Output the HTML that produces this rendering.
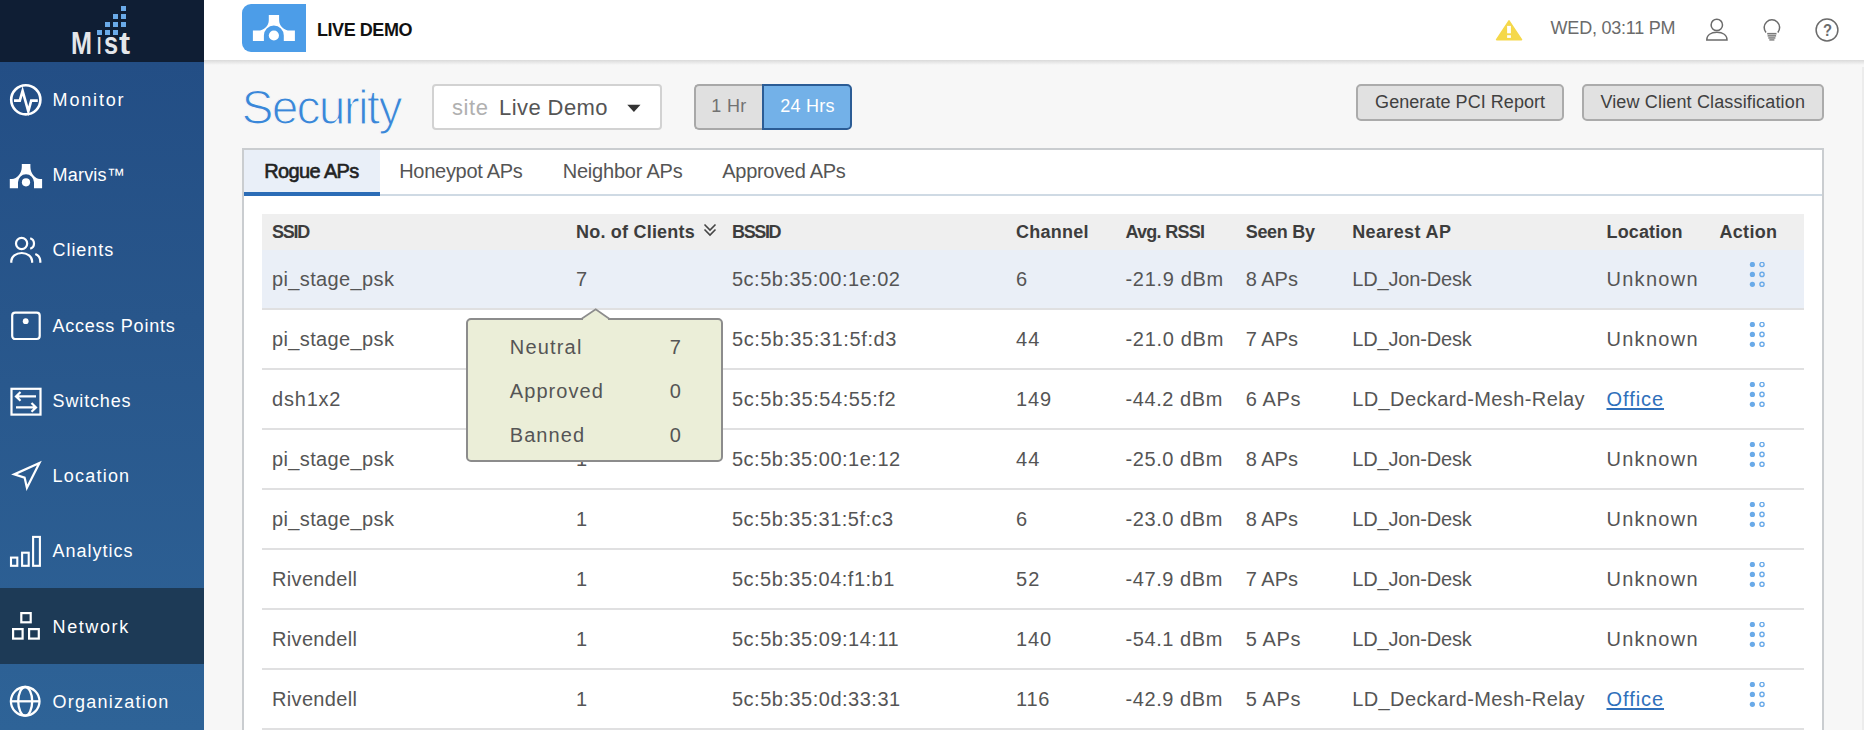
<!DOCTYPE html>
<html><head><meta charset="utf-8"><title>Security</title>
<style>
html,body{margin:0;padding:0;}
body{width:1864px;height:730px;overflow:hidden;position:relative;background:#f7f7f7;font-family:"Liberation Sans",sans-serif;}
.t{position:absolute;line-height:0;white-space:nowrap;}
#side{position:absolute;left:0;top:0;width:204px;height:730px;background:linear-gradient(180deg,#224d84 0px,#234e85 62px,#28568b 320px,#2e6397 730px);}
#logo{position:absolute;left:0;top:0;width:204px;height:62px;background:#0f1e34;}
#sel{position:absolute;left:0;top:588px;width:204px;height:75.5px;background:#1d3a56;}
.sq{position:absolute;width:5px;height:5px;background:#6aaae8;}
#hdr{position:absolute;left:204px;top:0;width:1660px;height:60px;background:#fff;}
#hshadow{position:absolute;left:204px;top:60px;width:1660px;height:5px;background:linear-gradient(180deg,#dadada,#f7f7f7);}
#lbox{position:absolute;left:242px;top:4px;width:64px;height:48px;background:#4c9de8;border-radius:9px 0 0 9px;}
#site{position:absolute;left:432px;top:84.3px;width:225.5px;height:41.4px;background:#fff;border:2px solid #d2d2d2;border-radius:4px;}
#b1h{position:absolute;left:694px;top:84.3px;width:66px;height:41.4px;background:#e0e0e0;border:2px solid #a8a8a8;border-right:none;border-radius:5px 0 0 5px;}
#b24{position:absolute;left:762px;top:84.3px;width:86px;height:41.4px;background:#73b1e8;border:2px solid #2b5c95;border-radius:0 5px 5px 0;}
.btn{position:absolute;box-sizing:border-box;background:#e1e1e1;border:2px solid #ababab;border-radius:5px;}
#panel{position:absolute;left:242px;top:148px;width:1578px;height:600px;background:#fff;border:2px solid #cacdd0;}
#tabact{position:absolute;left:244px;top:150px;width:136px;height:42px;background:#e9eff8;}
#tabline{position:absolute;left:244px;top:194px;width:1578px;height:2px;background:#cfdae4;}
#tabul{position:absolute;left:244px;top:192px;width:136px;height:4px;background:#2b6cb6;}
#thead{position:absolute;left:262px;top:214px;width:1542px;height:36px;background:#efefef;}
#row0{position:absolute;left:262px;top:250px;width:1542px;height:58px;background:#eaeff7;}
.rl{position:absolute;left:262px;width:1542px;height:2px;background:#e0e0e1;}
.dots{position:absolute;}
#tip{position:absolute;left:466px;top:318px;width:253px;height:140px;background:#ebeed8;border:2px solid #8c8c8c;border-radius:5px;}

svg.ic{position:absolute;overflow:visible;}
#vline{position:absolute;left:1862px;top:67px;width:2px;height:663px;background:#ececec;}
</style></head>
<body>
<div id="side"></div><div id="logo"></div><div id="sel"></div>
<div class="sq" style="left:120.7px;top:5.9px"></div>
<div class="sq" style="left:112.7px;top:14.0px"></div>
<div class="sq" style="left:120.7px;top:14.0px"></div>
<div class="sq" style="left:104.8px;top:21.9px"></div>
<div class="sq" style="left:112.7px;top:21.9px"></div>
<div class="sq" style="left:120.7px;top:21.9px"></div>
<div class="sq" style="left:96.9px;top:29.9px"></div>
<div class="sq" style="left:104.8px;top:29.9px"></div>
<div class="sq" style="left:112.7px;top:29.9px"></div>
<div class="t" style="left:71.00px;top:43.43px;font-size:30.5px;color:#e4e6ea;transform:scaleX(0.827);transform-origin:0 0;font-weight:bold;">M</div>
<div class="t" style="left:96.50px;top:43.43px;font-size:30.5px;color:#e4e6ea;transform:scaleX(0.509);transform-origin:0 0;font-weight:bold;">ı</div>
<div class="t" style="left:103.70px;top:43.43px;font-size:30.5px;color:#e4e6ea;transform:scaleX(0.832);transform-origin:0 0;font-weight:bold;">s</div>
<div class="t" style="left:119.40px;top:43.43px;font-size:30.5px;color:#e4e6ea;transform:scaleX(1.094);transform-origin:0 0;font-weight:bold;">t</div>
<div class="t" style="left:52.60px;top:99.76px;font-size:18px;color:#ffffff;letter-spacing:1.83px;">Monitor</div>
<div class="t" style="left:52.60px;top:175.01px;font-size:18px;color:#ffffff;letter-spacing:0.18px;">Marvis™</div>
<div class="t" style="left:52.60px;top:250.26px;font-size:18px;color:#ffffff;letter-spacing:0.92px;">Clients</div>
<div class="t" style="left:52.60px;top:325.51px;font-size:18px;color:#ffffff;letter-spacing:0.75px;">Access Points</div>
<div class="t" style="left:52.60px;top:400.76px;font-size:18px;color:#ffffff;letter-spacing:0.85px;">Switches</div>
<div class="t" style="left:52.60px;top:476.01px;font-size:18px;color:#ffffff;letter-spacing:1.21px;">Location</div>
<div class="t" style="left:52.60px;top:551.26px;font-size:18px;color:#ffffff;letter-spacing:0.98px;">Analytics</div>
<div class="t" style="left:52.60px;top:626.51px;font-size:18px;color:#ffffff;letter-spacing:1.59px;">Network</div>
<div class="t" style="left:52.60px;top:701.76px;font-size:18px;color:#ffffff;letter-spacing:1.24px;">Organization</div>
<div id="hdr"></div><div id="hshadow"></div>
<div id="lbox"></div>
<div class="t" style="left:317.00px;top:29.76px;font-size:18px;color:#111111;font-weight:bold;letter-spacing:-0.44px;">LIVE DEMO</div>
<div class="t" style="left:1823.00px;top:30.56px;font-size:16px;color:#6b6b6b;transform:scaleX(0.923);transform-origin:0 0;font-weight:bold;">?</div>
<div class="t" style="left:1550.60px;top:27.96px;font-size:18px;color:#6b6b6b;letter-spacing:-0.23px;">WED, 03:11 PM</div>
<div class="t" style="left:241.40px;top:108.17px;font-size:48px;color:#3a87d9;letter-spacing:-1.77px;-webkit-text-stroke:1.2px #f7f7f7;">Security</div>
<div id="site"></div>
<div class="t" style="left:452.00px;top:108.08px;font-size:22px;color:#b0b0b0;letter-spacing:0.58px;">site</div>
<div class="t" style="left:499.00px;top:108.08px;font-size:22px;color:#555555;letter-spacing:0.43px;">Live Demo</div>
<div id="b1h"></div><div id="b24"></div>
<div class="t" style="left:711.20px;top:105.76px;font-size:18px;color:#727272;letter-spacing:0.37px;">1 Hr</div>
<div class="t" style="left:780.30px;top:105.76px;font-size:18px;color:#ffffff;letter-spacing:0.26px;">24 Hrs</div>
<div class="btn" style="left:1356px;top:84px;width:208px;height:37.4px"></div>
<div class="btn" style="left:1582px;top:84px;width:241.5px;height:37.4px"></div>
<div class="t" style="left:1375.10px;top:101.96px;font-size:18px;color:#404040;letter-spacing:0.05px;">Generate PCI Report</div>
<div class="t" style="left:1600.40px;top:101.76px;font-size:18px;color:#404040;letter-spacing:0.15px;">View Client Classification</div>
<div id="panel"></div><div id="tabact"></div><div id="tabline"></div><div id="tabul"></div>
<div class="t" style="left:264.30px;top:171.27px;font-size:20px;color:#222222;letter-spacing:-0.63px;-webkit-text-stroke:0.6px #222;">Rogue APs</div>
<div class="t" style="left:399.20px;top:171.27px;font-size:20px;color:#555555;letter-spacing:-0.28px;">Honeypot APs</div>
<div class="t" style="left:562.70px;top:171.27px;font-size:20px;color:#555555;letter-spacing:-0.21px;">Neighbor APs</div>
<div class="t" style="left:722.30px;top:171.27px;font-size:20px;color:#555555;letter-spacing:-0.30px;">Approved APs</div>
<div id="thead"></div><div id="row0"></div>
<div class="rl" style="top:308px"></div>
<div class="rl" style="top:368px"></div>
<div class="rl" style="top:428px"></div>
<div class="rl" style="top:488px"></div>
<div class="rl" style="top:548px"></div>
<div class="rl" style="top:608px"></div>
<div class="rl" style="top:668px"></div>
<div class="rl" style="top:728px"></div>
<div class="t" style="left:272.00px;top:231.76px;font-size:18px;color:#3d3d3d;font-weight:bold;letter-spacing:-1.27px;">SSID</div>
<div class="t" style="left:576.00px;top:231.76px;font-size:18px;color:#3d3d3d;font-weight:bold;letter-spacing:0.21px;">No. of Clients</div>
<div class="t" style="left:732.00px;top:231.76px;font-size:18px;color:#3d3d3d;font-weight:bold;letter-spacing:-1.35px;">BSSID</div>
<div class="t" style="left:1016.00px;top:231.76px;font-size:18px;color:#3d3d3d;font-weight:bold;letter-spacing:0.25px;">Channel</div>
<div class="t" style="left:1125.50px;top:231.76px;font-size:18px;color:#3d3d3d;font-weight:bold;letter-spacing:-0.74px;">Avg. RSSI</div>
<div class="t" style="left:1245.70px;top:231.76px;font-size:18px;color:#3d3d3d;font-weight:bold;letter-spacing:-0.29px;">Seen By</div>
<div class="t" style="left:1352.20px;top:231.76px;font-size:18px;color:#3d3d3d;font-weight:bold;letter-spacing:0.38px;">Nearest AP</div>
<div class="t" style="left:1606.50px;top:231.76px;font-size:18px;color:#3d3d3d;font-weight:bold;letter-spacing:0.13px;">Location</div>
<div class="t" style="left:1719.50px;top:231.76px;font-size:18px;color:#3d3d3d;font-weight:bold;letter-spacing:0.30px;">Action</div>
<div class="t" style="left:272.00px;top:278.77px;font-size:20px;color:#555555;letter-spacing:0.37px;">pi_stage_psk</div>
<div class="t" style="left:576.00px;top:278.77px;font-size:20px;color:#555555;">7</div>
<div class="t" style="left:732.00px;top:278.77px;font-size:20px;color:#555555;letter-spacing:0.49px;">5c:5b:35:00:1e:02</div>
<div class="t" style="left:1016.00px;top:278.77px;font-size:20px;color:#555555;">6</div>
<div class="t" style="left:1125.50px;top:278.77px;font-size:20px;color:#555555;letter-spacing:0.68px;">-21.9 dBm</div>
<div class="t" style="left:1245.70px;top:278.77px;font-size:20px;color:#555555;letter-spacing:-0.01px;">8 APs</div>
<div class="t" style="left:1352.20px;top:278.77px;font-size:20px;color:#555555;letter-spacing:-0.16px;">LD_Jon-Desk</div>
<div class="t" style="left:1606.50px;top:278.77px;font-size:20px;color:#555555;letter-spacing:1.27px;">Unknown</div>
<svg class="dots" style="left:1746px;top:262.3px" width="24" height="30" viewBox="0 0 24 30"><g fill="#6aaae8"><circle cx="6.4" cy="2.5" r="2.6"/><circle cx="6.4" cy="12.4" r="2.6"/><circle cx="6.4" cy="22.3" r="2.6"/></g><g fill="none" stroke="#6aaae8" stroke-width="1.4"><circle cx="16" cy="2.5" r="2.1"/><circle cx="16" cy="12.4" r="2.1"/><circle cx="16" cy="22.3" r="2.1"/></g></svg>
<div class="t" style="left:272.00px;top:338.77px;font-size:20px;color:#555555;letter-spacing:0.37px;">pi_stage_psk</div>
<div class="t" style="left:732.00px;top:338.77px;font-size:20px;color:#555555;letter-spacing:0.62px;">5c:5b:35:31:5f:d3</div>
<div class="t" style="left:1016.00px;top:338.77px;font-size:20px;color:#555555;letter-spacing:1.11px;">44</div>
<div class="t" style="left:1125.50px;top:338.77px;font-size:20px;color:#555555;letter-spacing:0.69px;">-21.0 dBm</div>
<div class="t" style="left:1245.70px;top:338.77px;font-size:20px;color:#555555;letter-spacing:0.04px;">7 APs</div>
<div class="t" style="left:1352.20px;top:338.77px;font-size:20px;color:#555555;letter-spacing:-0.16px;">LD_Jon-Desk</div>
<div class="t" style="left:1606.50px;top:338.77px;font-size:20px;color:#555555;letter-spacing:1.27px;">Unknown</div>
<svg class="dots" style="left:1746px;top:322.3px" width="24" height="30" viewBox="0 0 24 30"><g fill="#6aaae8"><circle cx="6.4" cy="2.5" r="2.6"/><circle cx="6.4" cy="12.4" r="2.6"/><circle cx="6.4" cy="22.3" r="2.6"/></g><g fill="none" stroke="#6aaae8" stroke-width="1.4"><circle cx="16" cy="2.5" r="2.1"/><circle cx="16" cy="12.4" r="2.1"/><circle cx="16" cy="22.3" r="2.1"/></g></svg>
<div class="t" style="left:272.00px;top:398.77px;font-size:20px;color:#555555;letter-spacing:0.80px;">dsh1x2</div>
<div class="t" style="left:732.00px;top:398.77px;font-size:20px;color:#555555;letter-spacing:0.56px;">5c:5b:35:54:55:f2</div>
<div class="t" style="left:1016.00px;top:398.77px;font-size:20px;color:#555555;letter-spacing:0.83px;">149</div>
<div class="t" style="left:1125.50px;top:398.77px;font-size:20px;color:#555555;letter-spacing:0.58px;">-44.2 dBm</div>
<div class="t" style="left:1245.70px;top:398.77px;font-size:20px;color:#555555;letter-spacing:0.65px;">6 APs</div>
<div class="t" style="left:1352.20px;top:398.77px;font-size:20px;color:#555555;letter-spacing:0.39px;">LD_Deckard-Mesh-Relay</div>
<div class="t" style="left:1606.50px;top:398.77px;font-size:20px;color:#2f70bb;letter-spacing:0.94px;text-decoration:underline;text-decoration-thickness:2px;text-underline-offset:2px;">Office</div>
<svg class="dots" style="left:1746px;top:382.3px" width="24" height="30" viewBox="0 0 24 30"><g fill="#6aaae8"><circle cx="6.4" cy="2.5" r="2.6"/><circle cx="6.4" cy="12.4" r="2.6"/><circle cx="6.4" cy="22.3" r="2.6"/></g><g fill="none" stroke="#6aaae8" stroke-width="1.4"><circle cx="16" cy="2.5" r="2.1"/><circle cx="16" cy="12.4" r="2.1"/><circle cx="16" cy="22.3" r="2.1"/></g></svg>
<div class="t" style="left:272.00px;top:458.77px;font-size:20px;color:#555555;letter-spacing:0.37px;">pi_stage_psk</div>
<div class="t" style="left:576.00px;top:458.77px;font-size:20px;color:#555555;">1</div>
<div class="t" style="left:732.00px;top:458.77px;font-size:20px;color:#555555;letter-spacing:0.50px;">5c:5b:35:00:1e:12</div>
<div class="t" style="left:1016.00px;top:458.77px;font-size:20px;color:#555555;letter-spacing:1.11px;">44</div>
<div class="t" style="left:1125.50px;top:458.77px;font-size:20px;color:#555555;letter-spacing:0.58px;">-25.0 dBm</div>
<div class="t" style="left:1245.70px;top:458.77px;font-size:20px;color:#555555;letter-spacing:-0.01px;">8 APs</div>
<div class="t" style="left:1352.20px;top:458.77px;font-size:20px;color:#555555;letter-spacing:-0.16px;">LD_Jon-Desk</div>
<div class="t" style="left:1606.50px;top:458.77px;font-size:20px;color:#555555;letter-spacing:1.27px;">Unknown</div>
<svg class="dots" style="left:1746px;top:442.3px" width="24" height="30" viewBox="0 0 24 30"><g fill="#6aaae8"><circle cx="6.4" cy="2.5" r="2.6"/><circle cx="6.4" cy="12.4" r="2.6"/><circle cx="6.4" cy="22.3" r="2.6"/></g><g fill="none" stroke="#6aaae8" stroke-width="1.4"><circle cx="16" cy="2.5" r="2.1"/><circle cx="16" cy="12.4" r="2.1"/><circle cx="16" cy="22.3" r="2.1"/></g></svg>
<div class="t" style="left:272.00px;top:518.77px;font-size:20px;color:#555555;letter-spacing:0.37px;">pi_stage_psk</div>
<div class="t" style="left:576.00px;top:518.77px;font-size:20px;color:#555555;">1</div>
<div class="t" style="left:732.00px;top:518.77px;font-size:20px;color:#555555;letter-spacing:0.48px;">5c:5b:35:31:5f:c3</div>
<div class="t" style="left:1016.00px;top:518.77px;font-size:20px;color:#555555;">6</div>
<div class="t" style="left:1125.50px;top:518.77px;font-size:20px;color:#555555;letter-spacing:0.58px;">-23.0 dBm</div>
<div class="t" style="left:1245.70px;top:518.77px;font-size:20px;color:#555555;letter-spacing:-0.01px;">8 APs</div>
<div class="t" style="left:1352.20px;top:518.77px;font-size:20px;color:#555555;letter-spacing:-0.16px;">LD_Jon-Desk</div>
<div class="t" style="left:1606.50px;top:518.77px;font-size:20px;color:#555555;letter-spacing:1.27px;">Unknown</div>
<svg class="dots" style="left:1746px;top:502.3px" width="24" height="30" viewBox="0 0 24 30"><g fill="#6aaae8"><circle cx="6.4" cy="2.5" r="2.6"/><circle cx="6.4" cy="12.4" r="2.6"/><circle cx="6.4" cy="22.3" r="2.6"/></g><g fill="none" stroke="#6aaae8" stroke-width="1.4"><circle cx="16" cy="2.5" r="2.1"/><circle cx="16" cy="12.4" r="2.1"/><circle cx="16" cy="22.3" r="2.1"/></g></svg>
<div class="t" style="left:272.00px;top:578.77px;font-size:20px;color:#555555;letter-spacing:0.34px;">Rivendell</div>
<div class="t" style="left:576.00px;top:578.77px;font-size:20px;color:#555555;">1</div>
<div class="t" style="left:732.00px;top:578.77px;font-size:20px;color:#555555;letter-spacing:0.48px;">5c:5b:35:04:f1:b1</div>
<div class="t" style="left:1016.00px;top:578.77px;font-size:20px;color:#555555;letter-spacing:1.11px;">52</div>
<div class="t" style="left:1125.50px;top:578.77px;font-size:20px;color:#555555;letter-spacing:0.58px;">-47.9 dBm</div>
<div class="t" style="left:1245.70px;top:578.77px;font-size:20px;color:#555555;letter-spacing:0.04px;">7 APs</div>
<div class="t" style="left:1352.20px;top:578.77px;font-size:20px;color:#555555;letter-spacing:-0.16px;">LD_Jon-Desk</div>
<div class="t" style="left:1606.50px;top:578.77px;font-size:20px;color:#555555;letter-spacing:1.27px;">Unknown</div>
<svg class="dots" style="left:1746px;top:562.3px" width="24" height="30" viewBox="0 0 24 30"><g fill="#6aaae8"><circle cx="6.4" cy="2.5" r="2.6"/><circle cx="6.4" cy="12.4" r="2.6"/><circle cx="6.4" cy="22.3" r="2.6"/></g><g fill="none" stroke="#6aaae8" stroke-width="1.4"><circle cx="16" cy="2.5" r="2.1"/><circle cx="16" cy="12.4" r="2.1"/><circle cx="16" cy="22.3" r="2.1"/></g></svg>
<div class="t" style="left:272.00px;top:638.77px;font-size:20px;color:#555555;letter-spacing:0.34px;">Rivendell</div>
<div class="t" style="left:576.00px;top:638.77px;font-size:20px;color:#555555;">1</div>
<div class="t" style="left:732.00px;top:638.77px;font-size:20px;color:#555555;letter-spacing:0.50px;">5c:5b:35:09:14:11</div>
<div class="t" style="left:1016.00px;top:638.77px;font-size:20px;color:#555555;letter-spacing:0.83px;">140</div>
<div class="t" style="left:1125.50px;top:638.77px;font-size:20px;color:#555555;letter-spacing:0.58px;">-54.1 dBm</div>
<div class="t" style="left:1245.70px;top:638.77px;font-size:20px;color:#555555;letter-spacing:0.65px;">5 APs</div>
<div class="t" style="left:1352.20px;top:638.77px;font-size:20px;color:#555555;letter-spacing:-0.16px;">LD_Jon-Desk</div>
<div class="t" style="left:1606.50px;top:638.77px;font-size:20px;color:#555555;letter-spacing:1.27px;">Unknown</div>
<svg class="dots" style="left:1746px;top:622.3px" width="24" height="30" viewBox="0 0 24 30"><g fill="#6aaae8"><circle cx="6.4" cy="2.5" r="2.6"/><circle cx="6.4" cy="12.4" r="2.6"/><circle cx="6.4" cy="22.3" r="2.6"/></g><g fill="none" stroke="#6aaae8" stroke-width="1.4"><circle cx="16" cy="2.5" r="2.1"/><circle cx="16" cy="12.4" r="2.1"/><circle cx="16" cy="22.3" r="2.1"/></g></svg>
<div class="t" style="left:272.00px;top:698.77px;font-size:20px;color:#555555;letter-spacing:0.34px;">Rivendell</div>
<div class="t" style="left:576.00px;top:698.77px;font-size:20px;color:#555555;">1</div>
<div class="t" style="left:732.00px;top:698.77px;font-size:20px;color:#555555;letter-spacing:0.50px;">5c:5b:35:0d:33:31</div>
<div class="t" style="left:1016.00px;top:698.77px;font-size:20px;color:#555555;letter-spacing:0.80px;">116</div>
<div class="t" style="left:1125.50px;top:698.77px;font-size:20px;color:#555555;letter-spacing:0.58px;">-42.9 dBm</div>
<div class="t" style="left:1245.70px;top:698.77px;font-size:20px;color:#555555;letter-spacing:0.65px;">5 APs</div>
<div class="t" style="left:1352.20px;top:698.77px;font-size:20px;color:#555555;letter-spacing:0.39px;">LD_Deckard-Mesh-Relay</div>
<div class="t" style="left:1606.50px;top:698.77px;font-size:20px;color:#2f70bb;letter-spacing:0.94px;text-decoration:underline;text-decoration-thickness:2px;text-underline-offset:2px;">Office</div>
<svg class="dots" style="left:1746px;top:682.3px" width="24" height="30" viewBox="0 0 24 30"><g fill="#6aaae8"><circle cx="6.4" cy="2.5" r="2.6"/><circle cx="6.4" cy="12.4" r="2.6"/><circle cx="6.4" cy="22.3" r="2.6"/></g><g fill="none" stroke="#6aaae8" stroke-width="1.4"><circle cx="16" cy="2.5" r="2.1"/><circle cx="16" cy="12.4" r="2.1"/><circle cx="16" cy="22.3" r="2.1"/></g></svg>
<div id="tip"></div><div id="tiparr"></div>
<div class="t" style="left:509.80px;top:346.87px;font-size:20px;color:#555555;letter-spacing:1.18px;">Neutral</div>
<div class="t" style="left:669.70px;top:346.87px;font-size:20px;color:#555555;">7</div>
<div class="t" style="left:509.80px;top:390.87px;font-size:20px;color:#555555;letter-spacing:1.06px;">Approved</div>
<div class="t" style="left:669.70px;top:390.87px;font-size:20px;color:#555555;">0</div>
<div class="t" style="left:509.80px;top:434.87px;font-size:20px;color:#555555;letter-spacing:1.05px;">Banned</div>
<div class="t" style="left:669.70px;top:434.87px;font-size:20px;color:#555555;">0</div>

<div id="vline"></div>
<!-- LIVE DEMO logo icon -->
<svg class="ic" style="left:0;top:0" width="1864" height="730" viewBox="0 0 1864 730">
  <!-- live demo marvis icon -->
  <path fill="#fff" d="M268.8 15 H279.1 V20 C279.1 26 284 30.6 290 30.6 H294.9 V41.1 H283.8 V35.5 A9.9 9.9 0 0 0 263.9 35.5 V41.1 H252.9 V30.6 H258 C264 30.6 268.8 26 268.8 20 Z"/>
  <circle cx="273.9" cy="35.5" r="5.1" fill="#fff"/>
  <!-- sidebar: Monitor -->
  <g fill="none" stroke="#fff" stroke-width="2.6" stroke-linejoin="miter">
    <circle cx="25.8" cy="99.8" r="14.6"/>
    <path d="M14 100.6 H19.8 L22.6 90.8 L28.3 111.3 L31.2 100.6 H37.8"/>
  </g>
  <!-- Marvis -->
  <path fill="#fff" d="M21.8 163.9 H30.4 V167 C30.4 173 35 178.9 40 178.9 H42.1 V188.2 H34 V182.3 A8 8 0 0 0 18 182.3 V188.2 H9.8 V178.9 H12 C17 178.9 21.8 173 21.8 167 Z"/>
  <circle cx="26" cy="182.3" r="4.1" fill="#fff"/>
  <!-- Clients -->
  <g fill="none" stroke="#fff" stroke-width="2.2" stroke-linecap="butt">
    <circle cx="21.6" cy="243.5" r="5.6"/>
    <path d="M30.2 238.2 A5.6 5.6 0 0 1 30.2 248.8"/>
    <path d="M11.3 262.8 V261 A10.4 8 0 0 1 32.1 261 V262.8"/>
    <path d="M35.3 254 A8 8 0 0 1 40.3 261 V262.8"/>
  </g>
  <!-- Access Points -->
  <g fill="none" stroke="#fff" stroke-width="2.2">
    <rect x="12.2" y="312.6" width="27.5" height="26.4" rx="3"/>
  </g>
  <circle cx="25.7" cy="321.2" r="2.9" fill="#fff"/>
  <!-- Switches -->
  <g fill="none" stroke="#fff" stroke-width="2.2">
    <rect x="11.5" y="388.8" width="29" height="25.8"/>
    <path d="M16 396.4 H36 M20.5 392 L16 396.4 L20.5 400.8"/>
    <path d="M16 407.4 H36 M31.5 403 L36 407.4 L31.5 411.8"/>
  </g>
  <!-- Location -->
  <path fill="none" stroke="#fff" stroke-width="2.2" stroke-linejoin="miter" d="M39.4 463 L14.2 474.4 L24.6 477.6 L26.9 487.8 Z"/>
  <!-- Analytics -->
  <g fill="none" stroke="#fff" stroke-width="2.1">
    <rect x="11" y="557.6" width="6.3" height="8.2"/>
    <rect x="22.1" y="552.7" width="6.6" height="13.1"/>
    <rect x="33.1" y="536.9" width="6.8" height="28.9"/>
  </g>
  <!-- Network -->
  <g fill="none" stroke="#fff" stroke-width="2.2">
    <rect x="21.3" y="613.1" width="9.4" height="9.2"/>
    <rect x="13.1" y="629.1" width="9.5" height="9.5"/>
    <rect x="29.1" y="629.1" width="9.7" height="9.5"/>
  </g>
  <!-- Organization -->
  <g fill="none" stroke="#fff" stroke-width="2.3">
    <circle cx="25.2" cy="701.3" r="14.3"/>
    <ellipse cx="25.2" cy="701.3" rx="7" ry="14.3"/>
    <path d="M11 701.3 H39.5"/>
  </g>
  <!-- header: warning -->
  <path fill="#f5d84a" stroke="#f5d84a" stroke-width="1.6" stroke-linejoin="round" d="M1509 20.9 L1521.5 39.6 H1496.6 Z"/>
  <rect x="1507.1" y="25.9" width="3.8" height="7.4" fill="#fff"/>
  <rect x="1507.1" y="35.2" width="3.8" height="2.7" fill="#fff"/>
  <!-- user -->
  <g fill="none" stroke="#6b6b6b" stroke-width="1.5">
    <circle cx="1716.8" cy="24.9" r="5.7"/>
    <path d="M1706.8 39.9 C1706.8 35 1711 32.3 1716.9 32.3 C1722.8 32.3 1727 35 1727 39.9 Z"/>
  </g>
  <!-- bulb -->
  <g fill="none" stroke="#6b6b6b" stroke-width="1.5">
    <path d="M1766 32.5 A7.7 7.7 0 1 1 1777.8 32.5"/>
  </g>
  <g fill="#7a7a7a">
    <rect x="1767.2" y="32.9" width="9.3" height="1.6"/>
    <rect x="1767.6" y="35.1" width="8.5" height="1.5"/>
    <rect x="1768.3" y="37.2" width="7.1" height="1.5"/>
    <rect x="1769.3" y="39.2" width="5.1" height="1.4"/>
  </g>
  <!-- help -->
  <circle cx="1827" cy="30" r="10.9" fill="none" stroke="#6b6b6b" stroke-width="1.5"/>
  <!-- tooltip arrow -->
  <rect x="583" y="317.8" width="25" height="3" fill="#ebeed8"/>
  <path fill="#ebeed8" stroke="#8c8c8c" stroke-width="1.7" stroke-linejoin="miter" d="M581.3 319 L595.7 309.3 L609.6 319"/>
  <!-- caret -->
  <path fill="#333" d="M627.3 104.8 H640.5 L633.9 111.9 Z"/>
  <!-- sort chevrons -->
  <path fill="none" stroke="#444" stroke-width="1.6" d="M704.5 224.5 L710 230 L715.5 224.5 M704.5 229.5 L710 235 L715.5 229.5"/>
</svg>
</body></html>
